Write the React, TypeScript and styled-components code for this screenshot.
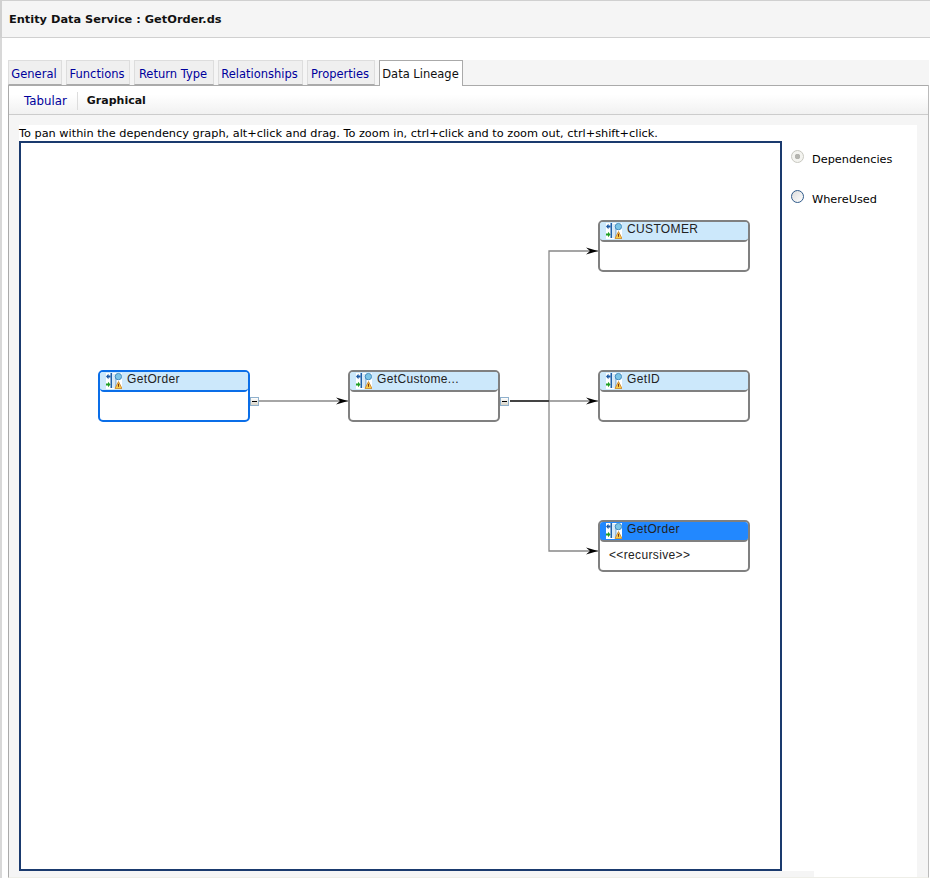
import React from "react";
import styled, { createGlobalStyle } from "styled-components";

const Global = createGlobalStyle`
  html, body { margin: 0; padding: 0; background: #fff; }
  #root { width: 930px; height: 878px; overflow: hidden; }
`;
const font = `"DejaVu Sans", "Liberation Sans", sans-serif`;

const Page = styled.div`
  width: 930px; height: 878px; overflow: hidden; background: #fff;
  font-family: ${font}; font-size: 11px; color: #000; display: flex; flex-direction: column;
`;
const Header = styled.header`
  height: 36px; flex: none; background: #f5f5f5; border: 1px solid #d0d0d0; border-width: 1px 0 1px 2px;
  display: flex; align-items: center; padding-left: 7px;
  font-weight: bold; font-size: 11.37px; color: #111;
`;
const Body = styled.div`
  flex: 1; min-height: 0; border-left: 2px solid #d8d8d8; padding: 22px 1px 0 6px; display: flex; flex-direction: column;
`;
const TabBar = styled.nav`
  height: 25px; flex: none; display: flex; gap: 4px; background: #f5f5f5; position: relative; z-index: 1;
`;
const Tab = styled.div<{ $active?: boolean; $w: number }>`
  height: ${p => (p.$active ? 26 : 25)}px; box-sizing: border-box; display: flex; align-items: center; justify-content: center;
  width: ${p => p.$w}px; border: 1px solid ${p => (p.$active ? "#aaa" : "#ddd")};
  border-bottom: ${p => (p.$active ? "none" : "1px solid #aaa")};
  padding: ${p => (p.$active ? "0 1px 0 0" : "2px 2px 0 0")};
  background: ${p => (p.$active ? "#fff" : "#efefef")}; color: ${p => (p.$active ? "#111" : "#00009c")};
  font-size: 11.5px;
`;
const Panel = styled.section`
  flex: 1; min-height: 0; border-left: 1px solid #aaa; border-right: 1px solid #bbb; border-bottom: 1px solid #eeeee8;
  background: #f5f5f5; display: flex; flex-direction: column;
`;
const SubBar = styled.div`
  height: 30px; flex: none; display: flex; align-items: center; background: linear-gradient(#fff 30%, #f1f1f1);
  border-top: 1px solid #aaa; border-bottom: 1px solid #ccc; padding: 1px 0 0 15px; box-sizing: border-box;
`;
const SubLink = styled.span`
  color: #00009c; padding-right: 10px; border-right: 1px solid #ddd; line-height: 18px; font-size: 11.8px;
`;
const SubActive = styled.span`
  font-weight: bold; font-size: 11px; color: #111; padding-left: 9px;
`;
const Content = styled.div`
  flex: 1; min-height: 0; margin: 10px 11px 0 10px; background: #fff; position: relative;
`;
const Hint = styled.p`
  margin: 0; height: 16px; line-height: 17px; font-size: 11.3px; white-space: nowrap;
`;
const Row = styled.div`
  display: flex; align-items: flex-start;
`;
const Canvas = styled.div`
  width: 763px; height: 730px; box-sizing: border-box; border: 2px solid #1a3a6e; background: #fff; position: relative; flex: none;
`;
const Footer = styled.div`
  position: absolute; left: 0; top: 746px; width: 795px; height: 6px; background: #f5f5f5;
`;
const Side = styled.aside`
  flex: none; padding: 11px 0 0 9px; display: flex; flex-direction: column; gap: 26px;
`;
const RadioRow = styled.label`
  display: flex; align-items: center; gap: 8px; height: 14px; font-size: 11.3px;
`;
const RadioDot = styled.span<{ $on?: boolean }>`
  width: 13px; height: 13px; border-radius: 50%; box-sizing: border-box; flex: none; margin-top: -5px;
  border: 1px solid ${p => (p.$on ? "#c8c8c0" : "#2f5a8a")};
  background: ${p => (p.$on ? "radial-gradient(circle, #b5b5b0 0 2.5px, #f4f4f0 3px)" : "linear-gradient(135deg, #dcdcdc, #fff)")};
`;
const Edges = styled.svg`
  position: absolute; left: 0; top: 0; width: 759px; height: 726px;
`;
const Node = styled.div<{ $x: number; $y: number; $sel?: boolean }>`
  position: absolute; left: ${p => p.$x}px; top: ${p => p.$y}px; width: 152px; height: 52px; box-sizing: border-box;
  border: 2px solid ${p => (p.$sel ? "#0a6ee8" : "#808080")}; border-radius: 5px; background: #fff;
  font-family: "Liberation Sans", sans-serif; font-size: 12px;
`;
const NodeHead = styled.div<{ $hot?: boolean; $sel?: boolean }>`
  height: 20px; box-sizing: border-box; border-radius: 3px 3px 4px 4px;
  border-bottom: 2px solid ${p => (p.$sel ? "#0a6ee8" : "#808080")};
  background: ${p => (p.$hot ? "#2288ff" : "#cce8fb")}; display: flex; align-items: flex-start; padding: 0 0 0 5px; gap: 5px;
  line-height: 15px; color: #222; letter-spacing: 0.35px;
`;
const NodeNote = styled.div`
  padding: 6px 0 0 9px; letter-spacing: 0.35px; color: #222;
`;
const Toggle = styled.div<{ $x: number; $y: number }>`
  position: absolute; left: ${p => p.$x}px; top: ${p => p.$y}px; width: 9px; height: 9px; box-sizing: border-box;
  border: 1px solid #8fb0cc; background: linear-gradient(#fff, #d8d4c8); display: flex; align-items: center; justify-content: center;
  &::after { content: ""; width: 5px; height: 1px; background: #000; }
`;
const IconSvg = styled.svg`
  flex: none;
`;

const NodeIcon = () => (
  <IconSvg width="17" height="17" viewBox="0 0 17 17">
    <rect x="1" y="1" width="16" height="16" fill="#fff" />
    <rect x="5.5" y="1" width="1.6" height="15" fill="#1f5fa8" />
    <rect x="7.1" y="2" width="3.6" height="14" fill="#d6e8f7" />
    <rect x="10.4" y="3" width="1" height="13" fill="#6f9fcc" />
    <path d="M1 4.5 L3.5 1.8 V3.5 H5.5 V5.5 H3.5 V7.2 Z" fill="#1b5aa6" />
    <path d="M5.5 12.5 L3 9.8 V11.5 H1 V13.5 H3 V15.2 Z" fill="#1f9f25" />
    <circle cx="13.4" cy="4.6" r="3.2" fill="#7cc4e6" stroke="#3a86ba" strokeWidth="0.9" />
    <path d="M13.5 9.5 L17 16.5 H10 Z" fill="#f7cf4a" stroke="#c9812a" strokeWidth="0.8" />
    <rect x="13" y="11.8" width="1" height="3" fill="#8a3010" />
  </IconSvg>
);

const Arrow = ({ x, y }: { x: number; y: number }) => (
  <path d={`M${x - 12} ${y - 3.5} L${x} ${y} L${x - 12} ${y + 3.5} L${x - 8} ${y} Z`} fill="#000" />
);

const tabs = [
  ["General", 54], ["Functions", 64], ["Return Type", 80], ["Relationships", 85], ["Properties", 68],
] as const;

export default function App() {
  return (
    <Page>
      <Global />
      <Header>Entity Data Service : GetOrder.ds</Header>
      <Body>
        <TabBar>
          {tabs.map(([t, w]) => <Tab key={t} $w={w}>{t}</Tab>)}
          <Tab $active $w={84}>Data Lineage</Tab>
        </TabBar>
        <Panel>
          <SubBar>
            <SubLink>Tabular</SubLink>
            <SubActive>Graphical</SubActive>
          </SubBar>
          <Content>
            <Hint>To pan within the dependency graph, alt+click and drag. To zoom in, ctrl+click and to zoom out, ctrl+shift+click.</Hint>
            <Row>
              <Canvas>
                <Edges viewBox="0 0 759 726">
                  <g fill="none" stroke="#888" strokeWidth="1.3">
                    <path d="M238 258 H327" />
                    <path d="M528 258 V108 H577" />
                    <path d="M528 258 V408 H577" />
                    <path d="M528 258 H577" />
                  </g>
                  <path d="M489 258 H528" stroke="#444" strokeWidth="1.8" fill="none" />
                  <Arrow x={327} y={258} />
                  <Arrow x={577} y={108} />
                  <Arrow x={577} y={258} />
                  <Arrow x={577} y={408} />
                </Edges>
                <Node $x={77} $y={227} $sel>
                  <NodeHead $sel><NodeIcon />GetOrder</NodeHead>
                </Node>
                <Toggle $x={229} $y={254} />
                <Node $x={327} $y={227}>
                  <NodeHead><NodeIcon />GetCustome...</NodeHead>
                </Node>
                <Toggle $x={479} $y={254} />
                <Node $x={577} $y={77}>
                  <NodeHead><NodeIcon />CUSTOMER</NodeHead>
                </Node>
                <Node $x={577} $y={227}>
                  <NodeHead><NodeIcon />GetID</NodeHead>
                </Node>
                <Node $x={577} $y={377}>
                  <NodeHead $hot><NodeIcon />GetOrder</NodeHead>
                  <NodeNote>&lt;&lt;recursive&gt;&gt;</NodeNote>
                </Node>
              </Canvas>
              <Side>
                <RadioRow><RadioDot $on />Dependencies</RadioRow>
                <RadioRow><RadioDot />WhereUsed</RadioRow>
              </Side>
            </Row>
            <Footer />
          </Content>
        </Panel>
      </Body>
    </Page>
  );
}
